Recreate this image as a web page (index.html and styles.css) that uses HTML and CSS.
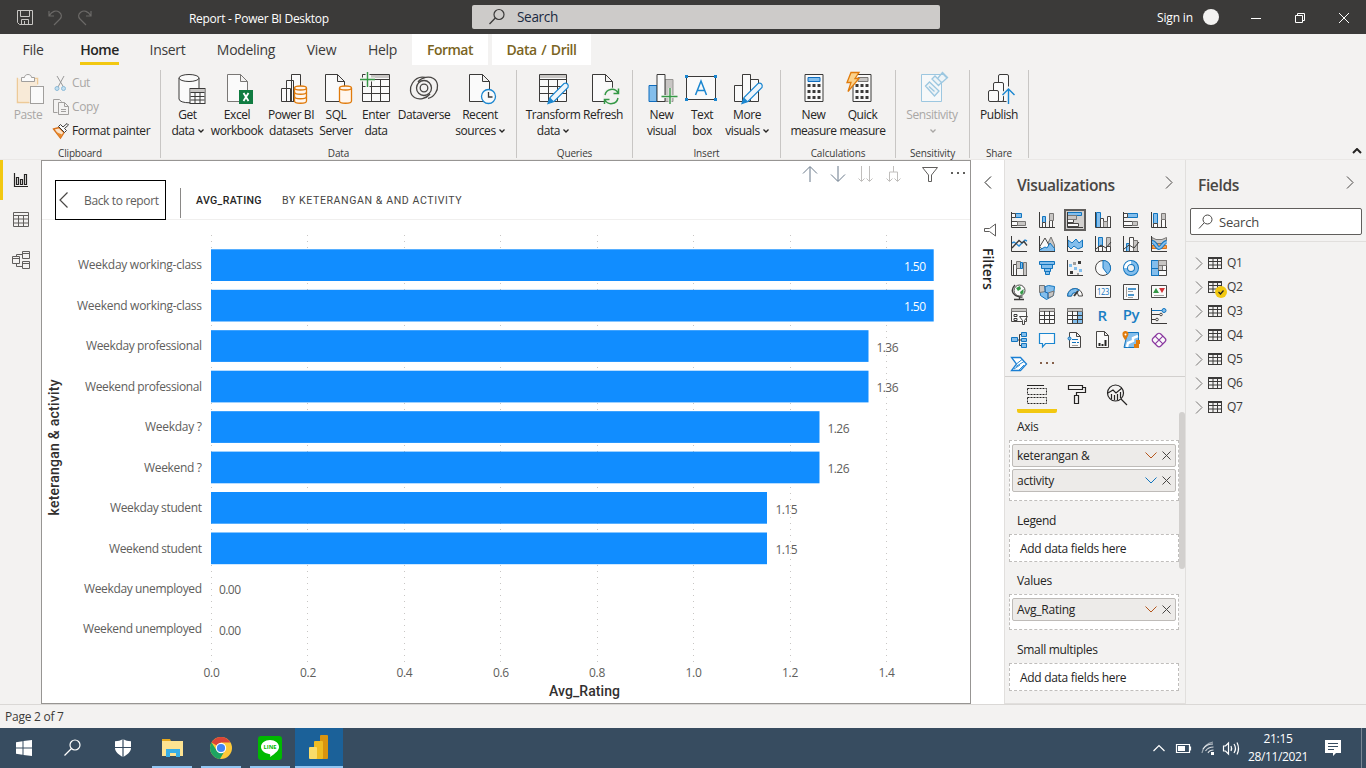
FILE: index.html
```html
<!DOCTYPE html>
<html lang="en">
<head>
<meta charset="utf-8">
<title>Report - Power BI Desktop</title>
<link rel="stylesheet" href="styles.css">
</head>
<body>
<svg class="defs" width="0" height="0">
  <defs>
    <symbol id="table" viewBox="0 0 14 12"><rect x=".5" y=".5" width="13" height="11" class="ln"/><path class="ln" d="M1 1.500h12M1 4.500h12M1 8h12M5 2v9.500M9.500 2v9.500"/></symbol>
    <symbol id="down" viewBox="0 0 12 7"><path fill="none" stroke="currentColor" d="M.5.5l5.500 5.500 5.500-5.500"/></symbol>
    <symbol id="x" viewBox="0 0 9 9"><path fill="none" stroke="#484644" d="M.5.5l8 8m0-8l-8 8"/></symbol>
    <symbol id="right" viewBox="0 0 8 13"><path fill="none" stroke="currentColor" d="M1 .5l6 6-6 6"/></symbol>
    <symbol id="caret" viewBox="0 0 6 4"><path fill="none" stroke="currentColor" stroke-width="1.300" d="M.5.5L3 3 5.500.5"/></symbol>
  </defs>
</svg>

<header class="titlebar">
  <svg class="quick" viewBox="0 0 100 34">
    <path fill="none" stroke="#c8c6c4" d="M17.500 10.500h15v14h-13l-2-2zM20.500 10.500v6h9v-6M21.500 24.500v-5h7v5M24.500 21v3"/>
    <path fill="none" stroke="#6b6967" stroke-width="1.200" d="M49 11v5h5M49 16c3-5 7-6 10-4 3 2 3 5 1 7l-6 6M91 11v5h-5M91 16c-3-5-7-6-10-4-3 2-3 5-1 7l6 6"/>
  </svg>
  <span class="doc-title">Report - Power BI Desktop</span>
  <div class="top-search">
    <svg width="18" height="18" viewBox="0 0 18 18"><circle cx="11" cy="6.500" r="5" fill="none" stroke="#3b3a39" stroke-width="1.200"/><path d="M7.300 10L1.500 16" stroke="#3b3a39" stroke-width="1.300"/></svg>
    <span>Search</span>
  </div>
  <span class="signin">Sign in</span>
  <span class="avatar"></span>
  <svg class="winctl" viewBox="1240 0 126 34"><path fill="none" stroke="#fff" d="M1251 18.500h10M1295.500 15.500h7v7h-7zM1297.500 15v-1.500h7v7h-1.500M1339 13l10 10m0-10l-10 10"/></svg>
</header>

<nav class="tabs">
  <span class="t-file">File</span><span class="t-home"><b>Home</b></span><span class="t-insert">Insert</span><span class="t-model">Modeling</span><span class="t-view">View</span><span class="t-help">Help</span><span class="ctx t-format">Format</span><span class="ctx t-drill">Data / Drill</span>
</nav>

<section class="ribbon">
  <div class="group g-clip">
    <div class="cmds">
      <div class="cmd off w-paste">
        <svg viewBox="8 70 40 36"><path d="M18 78.500h-.500v24h12M35 78.500h2.500v6" fill="#faeedd" stroke="#edca98" stroke-width="1.500"/><rect x="18" y="79" width="19" height="22" fill="#f8ead7"/><path d="M21.500 81.500v-4h3c0-4 7-4 7 0h3v4z" class="paper" stroke="#a19f9d"/><rect x="30.500" y="86.500" width="13" height="17" class="paper" stroke="#a19f9d"/></svg>
        <span>Paste</span>
      </div>
      <div class="clip-list">
        <div class="off"><svg viewBox="0 0 18 18"><path d="M5 2l6.500 11M12 2L6 13" fill="none" stroke="#999"/><circle cx="5" cy="14.500" r="2" fill="#c4dff0" stroke="#8bbbd9"/><circle cx="11.500" cy="14.500" r="2" fill="#c4dff0" stroke="#8bbbd9"/></svg>Cut</div>
        <div class="off"><svg viewBox="0 0 18 18"><path d="M5.500 14.500h-4v-13h6l2 2M6.500 4.500h6l4 4v8h-10zM12.500 4.500v4h4M9 11.500h5M9 13.500h5" fill="none" stroke="#a19f9d"/></svg>Copy</div>
        <div><svg viewBox="0 0 18 18"><path d="M1.500 7l5.500-1.500 5 5L8.500 16z" fill="#fbe3c8" stroke="#d8711a" stroke-width="1.300"/><path d="M4 10l6 2.500-1.500 3.500z" fill="#e88a2c"/><path d="M6.500 4.500l6 6 2-2-2-2L16.500 3 15 1.500 11 5 8.500 2.500z" fill="#fafafa" stroke="#3b3a39"/></svg>Format painter</div>
      </div>
    </div>
    <div class="caption">Clipboard</div>
  </div>

  <div class="group g-data">
    <div class="cmds">
      <div class="cmd w45"><svg viewBox="167.500 70 40 36"><path class="paper ink" d="M178.500 78v21c0 5 20 5 20 0v-21"/><ellipse class="paper ink" cx="188.500" cy="78" rx="10" ry="3.500"/><rect x="189.500" y="88.500" width="15" height="15" class="paper ink"/><path d="M190 90.500h14" stroke="#c8c6c4" stroke-width="3"/><path class="ln" d="M190 92.500h14M190 96.500h14M190 100h14M194.500 92v11M199.500 92v11"/></svg><span>Get<br>data<svg class="caret"><use href="#caret"/></svg></span></div>
      <div class="cmd w54"><svg viewBox="217 70 40 36"><path class="paper soft" d="M227.500 74.500h13l7 7v20h-20zM240.500 74.500v7h7"/><rect x="239" y="90" width="14" height="14" fill="#107c41"/><path d="M243.500 93l5 8m0-8l-5 8" stroke="#fff" stroke-width="1.800"/></svg><span>Excel<br>workbook</span></div>
      <div class="cmd w54"><svg viewBox="271 70 40 36"><path class="paper ink" d="M291.500 74.500h9v27h-9zM286.500 80.500h7v21h-7zM281.500 88.500h9v13h-9z"/><path class="cyl" d="M294.500 88v13c0 3 12 3 12 0v-13"/><ellipse class="cyl" cx="300.500" cy="88" rx="6" ry="2"/><path class="cyl none" d="M294.500 92c0 3 12 3 12 0M294.500 96.500c0 3 12 3 12 0"/></svg><span>Power BI<br>datasets</span></div>
      <div class="cmd w36"><svg viewBox="316 70 40 36"><path class="paper ink" d="M325.500 74.500h12l7 7v20h-19zM337.500 74.500v7h7"/><path class="cyl" d="M339.500 88v13c0 3 12 3 12 0v-13"/><ellipse class="cyl" cx="345.500" cy="88" rx="6" ry="2"/></svg><span>SQL<br>Server</span></div>
      <div class="cmd w44"><svg viewBox="356 70 40 36"><path class="paper ink" d="M362.500 74.500h27v27h-27z"/><path d="M371 76.500h18" stroke="#c8c6c4" stroke-width="3"/><path class="ln" d="M363 79.500h26M363 86.500h26M363 93.500h26M371.500 79v22M380.500 79v22"/><path d="M360 79.500h15M367.500 72v15" stroke="#f3f2f1" stroke-width="4"/><path class="plus" d="M360 79.500h15M367.500 72v15"/></svg><span>Enter<br>data</span></div>
      <div class="cmd w52"><svg viewBox="404 70 40 36"><g fill="none" stroke="#484644" stroke-width="1.300"><circle cx="424" cy="88" r="3.800"/><circle cx="424" cy="88" r="7.500"/><path d="M430 94c-4 5-11 6-15.500 3.500-5-3-5-10-2-14.500 3-4.500 8-6.500 12.500-5.500M418 82c4-5 11-6 15.500-3.500 5 3 5 10 2 14.500-2 3-4.500 5-7.500 5.300"/></g></svg><span>Dataverse</span></div>
      <div class="cmd w60"><svg viewBox="460 70 40 36"><path class="paper ink" d="M469.500 74.500h13l7 7v20h-20zM482.500 74.500v7h7"/><circle cx="488.500" cy="96.500" r="7" class="paper" stroke="#1a86d0" stroke-width="1.300"/><path class="ln" stroke-width="1.300" d="M488.500 92v5h4"/></svg><span>Recent<br>sources<svg class="caret"><use href="#caret"/></svg></span></div>
    </div>
    <div class="caption">Data</div>
  </div>

  <div class="group g-query">
    <div class="cmds">
      <div class="cmd w56"><svg viewBox="533 70 40 36"><path class="paper ink" d="M539.500 74.500h27v27h-27z"/><path d="M540 76.500h26" stroke="#c8c6c4" stroke-width="3"/><path class="ln" d="M540 79.500h26M540 86.500h26M540 93.500h26M548.500 79v22M557.500 79v22"/><path class="pencil" d="M548 103.500l2-6 14-14c3-1 5 1 4 4l-14 14z"/><path d="M548 103.500l2-6 4 4z" fill="#1a86d0"/></svg><span>Transform<br>data<svg class="caret"><use href="#caret"/></svg></span></div>
      <div class="cmd w44"><svg viewBox="583 70 40 36"><path class="paper ink" d="M592.500 74.500h13l7 7v20h-20zM605.500 74.500v7h7"/><circle cx="611.500" cy="96.500" r="9" fill="#f3f2f1"/><path d="M605 95a7 7 0 0 1 13-2M618.500 88.500v5h-5M618 98a7 7 0 0 1-13 2M604.500 104v-4.500h5" fill="none" stroke="#359846" stroke-width="1.500"/></svg><span>Refresh</span></div>
    </div>
    <div class="caption">Queries</div>
  </div>

  <div class="group g-insert">
    <div class="cmds">
      <div class="cmd w37"><svg viewBox="641.500 70 40 36"><path fill="#83beec" stroke="#0f6cbd" d="M648.500 85.500h8v16h-8z"/><path fill="#c8c6c4" stroke="#979593" d="M664.500 79.500h8v22h-8z"/><path class="paper ink" d="M656.500 74.500h8v27h-8z"/><path d="M661 96.500h16M669.500 88v16" stroke="#f3f2f1" stroke-width="3"/><path class="plus" d="M661 96.500h16M669.500 88v16"/></svg><span>New<br>visual</span></div>
      <div class="cmd w44"><svg viewBox="682 70 40 36"><path class="paper ink" d="M686.500 76.500h29v23h-29z"/><path fill="#1a86d0" d="M685 75h3v3h-3zM714 75h3v3h-3zM685 98h3v3h-3zM714 98h3v3h-3z"/><path d="M695.500 95l5.500-14 5.500 14M697.500 90.500h7" fill="none" stroke="#1a86d0" stroke-width="1.500"/></svg><span>Text<br>box</span></div>
      <div class="cmd w46"><svg viewBox="727 70 40 36"><path class="paper ink" d="M734.500 85.500h8v16h-8zM750.500 79.500h8v22h-8zM742.500 74.500h8v27h-8z"/><path class="pencil" d="M742 103.500l2-6 14-14c3-1 5 1 4 4l-14 14z"/><path d="M742 103.500l2-6 4 4z" fill="#1a86d0"/></svg><span>More<br>visuals<svg class="caret"><use href="#caret"/></svg></span></div>
    </div>
    <div class="caption">Insert</div>
  </div>

  <div class="group g-calc">
    <div class="cmds">
      <div class="cmd w49"><svg viewBox="793.500 70 40 36"><path class="paper ink" d="M804.500 74.500h18v27h-18z"/><path fill="#83beec" stroke="#0f6cbd" d="M807.500 77.500h12v4h-12z"/><path stroke="#3b3a39" stroke-width="3" stroke-dasharray="3 2" d="M807 85.500h13M807 91.500h13M807 97.500h13"/></svg><span>New<br>measure</span></div>
      <div class="cmd w49"><svg viewBox="842.500 70 40 36"><path class="paper ink" d="M852.500 74.500h18v27h-18z"/><path fill="#c8c6c4" stroke="#797775" d="M857.500 77.500h10v4h-10z"/><path stroke="#3b3a39" stroke-width="3" stroke-dasharray="3 2" d="M855 85.500h13M855 91.500h13M855 97.500h13"/><path fill="#fbd28b" stroke="#e07b0c" stroke-width="1.300" d="M850.500 72.500h8l-4 6h4l-11 13 3-9h-4z"/></svg><span>Quick<br>measure</span></div>
    </div>
    <div class="caption">Calculations</div>
  </div>

  <div class="group g-sens">
    <div class="cmds">
      <div class="cmd off w72"><svg viewBox="912 70 40 36"><path fill="#f6f8f9" stroke="#9cc7e0" d="M921.500 74.500h20v27h-20z"/><path fill="#eef4f7" stroke="#9cc7e0" stroke-width="1.300" d="M925.500 86l4-4 9.500 9-4.500 5zM929 86.500l5.500 5M932 79l6.500 6.500 3-3-6.500-6.500zM938 78l4-5 5 5-5 4.500M942 72l6 6"/></svg><span>Sensitivity<br><svg class="caret"><use href="#caret"/></svg></span></div>
    </div>
    <div class="caption">Sensitivity</div>
  </div>

  <div class="group g-share">
    <div class="cmds">
      <div class="cmd w58"><svg viewBox="979 70 40 36"><g class="paper ink"><rect x="998.500" y="74.500" width="10" height="27" rx="1.500"/><rect x="993.500" y="82.500" width="10" height="19" rx="1.500"/><rect x="988.500" y="90.500" width="10" height="11" rx="1.500"/></g><path d="M1008.500 104V89.500M1002.500 95l6-6 6 6" fill="none" stroke="#f3f2f1" stroke-width="4"/><path d="M1008.500 104V89M1002.500 95l6-6 6 6" fill="none" stroke="#1a86d0" stroke-width="1.400"/></svg><span>Publish</span></div>
    </div>
    <div class="caption">Share</div>
  </div>
  <svg class="collapse" viewBox="0 0 10 6"><path d="M1 5l4-4 4 4" fill="none" stroke="#252423" stroke-width="2"/></svg>
</section>

<main class="work">
  <aside class="rail">
    <div class="view on"><svg viewBox="0 0 20 20"><path d="M3.500 3v13.500H17M5.500 7.500h2v7h-2zM9.500 9.500h2v5h-2zM13.500 4.500h2v10h-2z" fill="none" stroke="#252423" stroke-width="1.200"/></svg></div>
    <div class="view"><svg viewBox="0 0 20 20"><path d="M2.500 2.500h15v14h-15zM2 5.500h16M2 9h16M2 13h16M7.500 5v12M12.500 5v12" fill="none" stroke="#605e5c"/></svg></div>
    <div class="view"><svg viewBox="0 0 20 20"><path d="M1.500 6.500h7v7h-7zM1.500 8.500h7M11.500 1.500h7v7h-7zM11.500 3.500h7M11.500 11.500h7v7h-7zM11.500 13.500h7M5.500 6V4.500h6M5.500 14v2.500h6" fill="none" stroke="#605e5c"/></svg></div>
  </aside>

  <section class="canvas">
    <div class="focus-head">
      <div class="back"><svg viewBox="0 0 10 16"><path d="M8.500.5L1 8l7.500 7.500" fill="none" stroke="#484644" stroke-width="1.200"/></svg><span>Back to report</span></div>
      <i class="bar"></i>
      <span class="measure">AVG_RATING</span><span class="by">BY KETERANGAN &amp; AND ACTIVITY</span>
      <svg class="tools" viewBox="800 163 170 22">
        <g fill="none" stroke="#797775"><path d="M810 182v-15M803 173.500l7-7 7 7M838 166v15M831 174.500l7 7 7-7" stroke="#69798a"/><path stroke="#c0bebc" d="M861.500 166v15M858.500 178.500l3 3 3-3M869.500 166v15M866.500 178.500l3 3 3-3M893.500 166v6M889.500 181v-9h8v9M886.500 178.500l3 3 3-3M894.500 178.500l3 3 3-3"/><path stroke="#605e5c" d="M922.500 167.500h15l-6 7.500v6.500h-3v-6.500z"/></g>
        <path fill="#605e5c" d="M951 172h2v2h-2zM957 172h2v2h-2zM963 172h2v2h-2z"/>
      </svg>
    </div>
    <svg class="chart" viewBox="42 220 928 483">
      <g class="grid"><path d="M211.500 235v428M307.500 235v428M404.500 235v428M500.500 235v428M597.500 235v428M693.500 235v428M790.500 235v428M886.500 235v428"/></g>
      <g fill="#118dff">
        <rect x="211" y="249.300" width="722.700" height="31.700"/><rect x="211" y="289.800" width="722.700" height="31.700"/>
        <rect x="211" y="330.200" width="657.500" height="31.700"/><rect x="211" y="370.700" width="657.500" height="31.700"/>
        <rect x="211" y="411.200" width="608.500" height="31.700"/><rect x="211" y="451.600" width="608.500" height="31.700"/>
        <rect x="211" y="492" width="556" height="31.700"/><rect x="211" y="532.500" width="556" height="31.700"/>
      </g>
      <g class="cat">
        <text x="202" y="269" textLength="124">Weekday working-class</text>
        <text x="202" y="310" textLength="125">Weekend working-class</text>
        <text x="202" y="350" textLength="116">Weekday professional</text>
        <text x="202" y="391" textLength="117">Weekend professional</text>
        <text x="202" y="431" textLength="57">Weekday ?</text>
        <text x="202" y="472" textLength="58">Weekend ?</text>
        <text x="202" y="512" textLength="92">Weekday student</text>
        <text x="202" y="553" textLength="93">Weekend student</text>
        <text x="202" y="593" textLength="118">Weekday unemployed</text>
        <text x="202" y="633" textLength="119">Weekend unemployed</text>
      </g>
      <g class="val"><text class="in" x="904" y="271" textLength="22">1.50</text><text class="in" x="904" y="311" textLength="22">1.50</text><text x="876.500" y="352" textLength="22">1.36</text><text x="876.500" y="392" textLength="22">1.36</text><text x="827.500" y="433" textLength="22">1.26</text><text x="827.500" y="473" textLength="22">1.26</text><text x="775.500" y="514" textLength="22">1.15</text><text x="775.500" y="554" textLength="22">1.15</text><text x="219" y="594" textLength="22">0.00</text><text x="219" y="635" textLength="22">0.00</text></g>
      <g class="tick"><text x="211.500" y="677">0.0</text><text x="308" y="677">0.2</text><text x="404.400" y="677">0.4</text><text x="500.800" y="677">0.6</text><text x="597" y="677">0.8</text><text x="693.500" y="677">1.0</text><text x="790" y="677">1.2</text><text x="886.500" y="677">1.4</text></g>
      <text class="axis-t" x="584.500" y="696" textLength="71">Avg_Rating</text>
      <text class="axis-t" transform="translate(59 447.500) rotate(-90)" textLength="136">keterangan &amp; activity</text>
    </svg>
  </section>

  <aside class="filters">
    <svg class="f-chev" viewBox="0 0 8 13"><path d="M7 .5l-6 6 6 6" fill="none" stroke="#252423"/></svg>
    <svg class="f-fun" viewBox="0 0 13 14"><path d="M11.500 1v12L5.500 8.500h-5v-3h5z" fill="none" stroke="#605e5c"/></svg>
    <span>Filters</span>
  </aside>

  <aside class="viz">
    <div class="pane-head"><h2 class="h-viz">Visualizations</h2><svg><use href="#right"/></svg></div>
    <div class="palette">
      <svg viewBox="0 0 16 16"><path class="b" d="M4.500 1.500h6v4h-6z"/><path class="w" d="M.5 1.500h4v4h-4zM.5 9.500h6v4h-6z"/><path class="g" d="M6.500 9.500h8v4h-8z"/><path class="ax" d="M.5 0v15.500H16"/></svg>
      <svg viewBox="0 0 16 16"><path class="b" d="M3.500 4.500h3v6h-3z"/><path class="w" d="M3.500 10.500h3v5h-3zM10.500 8.500h3v7h-3z"/><path class="g" d="M10.500 1.500h4v7h-4z"/><path class="ax" d="M.5 0v15.500H16"/></svg>
      <svg class="sel" viewBox="-1 -1 18 18"><path class="b" d="M.5.5h14v3h-14z"/><path class="w" d="M.5 7.500h6v3h-6zM.5 11.500h11v3h-11z"/><path class="g" d="M.5 3.500h9v4h-9z"/><path class="ax" d="M.5 0v15.500H16"/></svg>
      <svg viewBox="0 0 16 16"><path class="b" d="M1.500.5h4v15h-4z"/><path class="w" d="M5.500 6.500h3v9h-3zM12.500 4.500h3v11h-3z"/><path class="g" d="M8.500 9.500h4v6h-4z"/><path class="ax" d="M.5 0v15.500H16"/></svg>
      <svg viewBox="0 0 16 16"><path class="b" d="M4.500 1.500h10v4h-10z"/><path class="w" d="M.5 1.500h4v4h-4zM.5 9.500h9v4h-9z"/><path class="g" d="M9.500 9.500h5v4h-5z"/><path class="ax" d="M.5 0v15.500H16"/></svg>
      <svg viewBox="0 0 16 16"><path class="b" d="M2.500 1.500h4v10h-4z"/><path class="w" d="M2.500 11.500h4v4h-4zM10.500 7.500h4v8h-4z"/><path class="g" d="M10.500 1.500h4v6h-4z"/><path class="ax" d="M.5 0v15.500H16"/></svg>

      <svg viewBox="0 0 16 16"><path d="M1 7l2-1 5 4 6-6 2 1" fill="none" stroke="#2a8ad4" stroke-width="1.400"/><path class="ax" stroke-width="1.300" d="M1 12l7-7.500 3 2.500 2-1.500 3 4"/><path class="ax" d="M.5 0v15.500H16"/></svg>
      <svg viewBox="0 0 16 16"><path class="g" d="M9 7l3-6 3.500 8v6H9z"/><path class="w" d="M.5 11L6 2l5 9-5 4z"/><path class="b" d="M.5 15.500V14L6 11l2 1 3-5 4.500 5.500v3z"/><path class="ax" d="M.5 0v15.500H16"/></svg>
      <svg viewBox="0 0 16 16"><path class="b" d="M1 4l4 3 4-4 3 4 3.500-3v7L11 13l-4-3-3 3-3-3z"/><path class="ax" d="M.5 0v15.500H16"/></svg>
      <svg viewBox="0 0 16 16"><path class="b" d="M3.500 1.500h4v9h-4z"/><path class="g" d="M11.500 1.500h4v9h-4z"/><path class="w" d="M3.500 10.500h4v5h-4zM11.500 10.500h4v5h-4z"/><path class="ax" d="M.5 0v15.500H16M1 13l5-4 5 3 5-6"/></svg>
      <svg viewBox="0 0 16 16"><path class="b" d="M3.500 7.500h4v8h-4z"/><path class="w" d="M6.500 1.500h4v14h-4z"/><path class="g" d="M10.500 4.500h4v11h-4z"/><path class="ax" d="M.5 0v15.500H16M1 13l5-4 5 3 5-6"/></svg>
      <svg viewBox="0 0 16 16"><path d="M1 9.500h4l2-2h3l2 2h3.500v3H1z" fill="#f2a052" stroke="#d8711a"/><path class="g" d="M1 1.500l4 2h6l4.500-2v3l-4.500 3H6L1 4.500z"/><path d="M1 6c4 0 4 6 7 6s4-6 7.500-6" fill="none" stroke="#1175bf" stroke-width="4"/><path d="M1 6c4 0 4 6 7 6s4-6 7.500-6" fill="none" stroke="#83beec" stroke-width="2"/><path class="ax" d="M.5 0v15.500H16"/></svg>

      <svg viewBox="0 0 16 16"><path class="w" d="M2.500 4.500h3v11h-3z"/><path class="g" d="M5.500 1.500h4v7h-4zM12.500 2.500h3v13h-3z"/><path class="b" d="M9.500 2.500h2v6h-2z"/><path class="ax" d="M.5 0v15.500H16"/></svg>
      <svg viewBox="0 0 16 16"><path class="b" d="M.5 1.500h15v3h-15zM2.500 4.500h11v4h-11zM5.500 8.500h6v3h-6zM6.500 11.500h4v3h-4z"/></svg>
      <svg viewBox="0 0 16 16"><path fill="#83beec" d="M2 4h3v3H2zM7 7h3v3H7zM12 9h3v3h-3z"/><path fill="#3b3a39" d="M11 1h3v3h-3zM3 11h3v3H3z"/><path fill="#a19f9d" d="M6 2h3v3H6zM10 13h2v2h-2z"/><path class="ax" d="M.5 0v15.500H16"/></svg>
      <svg viewBox="0 0 16 16"><circle class="w" cx="8" cy="8" r="7.500"/><path class="b" d="M8 8V.5A7.500 7.500 0 0 1 12.500 14z"/></svg>
      <svg viewBox="0 0 16 16"><circle cx="8" cy="8" r="5.500" fill="none" stroke="#1175bf" stroke-width="5"/><circle cx="8" cy="8" r="5.500" fill="none" stroke="#83beec" stroke-width="3"/><path d="M2.500 8A5.500 5.500 0 0 1 8 2.500" fill="none" stroke="#fff" stroke-width="3"/></svg>
      <svg viewBox="0 0 16 16"><path class="w" d="M.5.5h15v15H.5z"/><path class="b" d="M.5.5h7v8h-7zM.5 8.500h7v7h-7z"/><path class="g" d="M7.500.5h8v5h-8zM7.500 5.500h4v5h-4z"/><path class="ax" d="M7.500 10.500h8"/></svg>

      <svg viewBox="0 0 16 16"><circle class="w" cx="8.500" cy="6.500" r="5.500"/><path fill="#359846" d="M5 4l4-2 1 3-3 2zM9 8l3.500-3v4l-2.500 2z"/><path class="ax" stroke-width="1.300" d="M4 1c-6 6-1 12.500 7.500 12M8.500 13v2.500M3 15.500h10"/></svg>
      <svg viewBox="0 0 16 16"><path class="b" d="M.5 1.500l6 1 3-1 6 1-1 9-7 4-6-4z"/><path class="g" d="M.5 1.500h5l1 6-6 1zM9 9l6-2-1 5-5 2z"/><path d="M6 2v6l3 1v5" fill="none" stroke="#0f6cbd"/></svg>
      <svg viewBox="0 0 16 16"><path class="w" d="M.5 12a7.500 7.500 0 0 1 15 0h-4a3.500 3.500 0 0 0-7 0z"/><path class="b" d="M.5 12A7.500 7.500 0 0 1 12 5.700L9.500 9a3.500 3.500 0 0 0-5 3z"/><path class="ax" stroke-width="2" d="M7 12l4-5"/></svg>
      <svg viewBox="0 0 16 16"><path class="w" d="M.5 1.500h15v12H.5z"/><text x="8" y="11" textLength="12" lengthAdjust="spacingAndGlyphs" class="i123">123</text></svg>
      <svg viewBox="0 0 16 16"><path class="w" d="M.5.5h15v15H.5z"/><path d="M5 5h8M5 11h6" stroke="#1175bf" stroke-width="1.500"/><path d="M3.500 3v10M5 7.500h5M5 13.500h5" stroke="#a19f9d"/></svg>
      <svg viewBox="0 0 16 16"><path class="w" d="M.5 1.500h15v12H.5z"/><path fill="#359846" d="M2 9l3-5 3 5z"/><path fill="#d13438" d="M8 4h6l-3 5z"/><path stroke="#a19f9d" d="M3 11.500h10"/></svg>

      <svg viewBox="0 0 16 16"><path class="w" d="M.5 1.500h15v12H.5z"/><path class="g" d="M.5.5h15v3H.5z"/><path class="ax" d="M3 6.500h3v2H3zM3 10.500h3v2H3z"/><path class="w" d="M8.500 8.500h8l-3 4v4h-2v-4z"/></svg>
      <svg viewBox="0 0 16 16"><path class="w" d="M.5.5h15v15H.5z"/><path class="g" d="M.5.5h15v3H.5z"/><path class="ax" d="M.5 7.500h15M.5 11.500h15M5.500 3v12M10.500 3v12"/></svg>
      <svg viewBox="0 0 16 16"><path class="w" d="M.5.5h15v15H.5z"/><path fill="#83beec" d="M10 3h5v12H5v-4h5z"/><path class="g" d="M.5.5h15v3H.5z"/><path class="ax" d="M.5 7.500h15M.5 11.500h15M5.500 3v12M10.500 3v12"/></svg>
      <svg viewBox="0 0 16 16"><text class="lang" x="7" y="13">R</text></svg>
      <svg viewBox="0 0 16 16"><text class="lang" x="8" y="12">Py</text></svg>
      <svg viewBox="0 0 16 16"><path class="ax" d="M.5 0v15.500H16M1 6.500h8M1 11.500h4M9 6.500h2"/><path d="M1 2.500h10" stroke="#1175bf"/><circle class="b" cx="13" cy="2.500" r="2"/><circle class="w" cx="10" cy="6.500" r="1.300"/><circle class="w" cx="6" cy="11.500" r="1.300"/></svg>

      <svg viewBox="0 0 16 16"><path class="ax" d="M6 8h5M8.500 2.500v11M8.500 2.500h2M8.500 13.500h2"/><path class="b" d="M.5 5.500h6v4h-6zM10.500.5h5v4h-5zM10.500 6.500h5v3h-5zM10.500 11.500h5v4h-5z"/></svg>
      <svg viewBox="0 0 16 16"><path d="M.5 1.500h15v10h-9l-3 3.500v-3.500h-3z" fill="#fafafa" stroke="#1a86d0" stroke-width="1.200"/></svg>
      <svg viewBox="0 0 16 16"><path class="w" d="M2.500.5h7l4 4v11h-11zM9.500.5v4h4"/><circle class="b" cx="2.500" cy="6.500" r="1.500"/><path d="M5 7.500h6M5 10.500h4M10 10.500h2" stroke="#1175bf"/><path stroke="#a19f9d" d="M5 13.500h6"/></svg>
      <svg viewBox="0 0 16 16"><path class="w" d="M1.500-.5h8l4 4v12h-12zM9.500-.5v4h4"/><path d="M4.500 11v3M7.500 12v2M10.500 8v6" stroke="#252423" stroke-width="2"/></svg>
      <svg viewBox="0 0 16 16"><path class="b" d="M4.500.5h11v15H1z"/><path d="M4 15l1-4 5-2V6l5-2" stroke="#fff" fill="none" stroke-width="2.500"/><path fill="#e07b0c" d="M2 8C0 5-.5 4-.5 2.500a3 3 0 0 1 6-1C5.500 4 4 5.500 2 8.500zM13 8h4v4h-4zM11 12h5v4h-5z"/><circle cx="2.500" cy="2.500" r="1" fill="#fff"/></svg>
      <svg viewBox="0 0 16 16"><g transform="rotate(45 8 8)" fill="#fafafa" stroke="#8b3aa0" stroke-width="1.200"><rect x="2.500" y="2.500" width="11" height="11" rx="2.500"/><path d="M8 2.500v11M2.500 8h11"/></g></svg>

      <svg viewBox="0 0 16 16"><path d="M.5 1.500h9l6 6.500-6 6.500h-9l5-6.500z" fill="#fff" stroke="#1a7fd4" stroke-width="1.300"/><path d="M6 7.500l5-4M5 10.500l8-5M3 13l6-4M8 14l5-5" fill="none" stroke="#2a8ad4"/></svg>
      <svg viewBox="0 0 16 16"><path fill="#85604a" d="M1 6h2v2H1zM7 6h2v2H7zM13 6h2v2h-2z"/></svg>
    </div>
    <div class="modes">
      <div class="on"><svg viewBox="0 0 22 22"><path d="M1 1.500h17" stroke="#252423"/><path d="M1.500 4.500h19v6h-19zM1.500 13.500h19v6h-19z" fill="none" stroke="#252423" stroke-dasharray="2 1"/></svg></div>
      <div><svg viewBox="0 0 22 22"><path d="M2.500 1.500h14v4h-14zM16.500 3.500h3v5h-9v3M8.500 11.500h4v8h-4z" fill="none" stroke="#252423" stroke-width="1.200"/></svg></div>
      <div><svg viewBox="0 0 22 22"><path d="M15 15l6 6M2 9l5-3 3 3 6-5M5.500 10v5M8.500 11v5M11.500 10v6M14.500 8v6" stroke="#252423" fill="none" stroke-width="1.200"/><circle cx="9.500" cy="9" r="8" fill="none" stroke="#252423" stroke-width="1.200"/></svg></div>
    </div>
    <div class="wells">
      <i class="thumb"></i>
      <h3>Axis</h3>
      <div class="well"><div class="chip"><span>keterangan &amp;</span><svg class="dn red"><use href="#down"/></svg><svg class="cx"><use href="#x"/></svg></div><div class="chip"><span>activity</span><svg class="dn blue"><use href="#down"/></svg><svg class="cx"><use href="#x"/></svg></div></div>
      <h3>Legend</h3>
      <div class="well empty">Add data fields here</div>
      <h3>Values</h3>
      <div class="well"><div class="chip"><span>Avg_Rating</span><svg class="dn red"><use href="#down"/></svg><svg class="cx"><use href="#x"/></svg></div></div>
      <h3>Small multiples</h3>
      <div class="well empty">Add data fields here</div>
    </div>
  </aside>

  <aside class="fields">
    <div class="pane-head"><h2 class="h-fields">Fields</h2><svg><use href="#right"/></svg></div>
    <div class="find"><svg viewBox="0 0 16 16"><circle cx="9.500" cy="5.500" r="4.500" fill="none" stroke="#484644"/><path d="M6 9L1 14.500" stroke="#484644"/></svg><span>Search</span></div>
    <ul>
      <li><svg class="exp"><use href="#right"/></svg><i><svg><use href="#table"/></svg></i>Q1</li>
      <li><svg class="exp"><use href="#right"/></svg><i><svg><use href="#table"/></svg><svg class="badge" viewBox="0 0 12 12"><circle cx="6" cy="6" r="6" fill="#f2c811"/><path d="M3.500 6l2 2 3-3.500" fill="none" stroke="#252423" stroke-width="1.200"/></svg></i>Q2</li>
      <li><svg class="exp"><use href="#right"/></svg><i><svg><use href="#table"/></svg></i>Q3</li>
      <li><svg class="exp"><use href="#right"/></svg><i><svg><use href="#table"/></svg></i>Q4</li>
      <li><svg class="exp"><use href="#right"/></svg><i><svg><use href="#table"/></svg></i>Q5</li>
      <li><svg class="exp"><use href="#right"/></svg><i><svg><use href="#table"/></svg></i>Q6</li>
      <li><svg class="exp"><use href="#right"/></svg><i><svg><use href="#table"/></svg></i>Q7</li>
    </ul>
  </aside>
</main>

<footer class="status">Page 2 of 7</footer>

<div class="taskbar">
  <div class="app start"><svg viewBox="0 0 24 24"><path fill="#fff" d="M4 6.300l6.500-1v6.200H4zM11.500 5.100L20 4v7.500h-8.500zM4 12.500h6.500v6.200l-6.500-1zM11.500 12.500H20V20l-8.500-1.100z"/></svg></div>
  <div class="app find-app"><svg viewBox="0 0 24 24"><circle cx="15" cy="9" r="5" fill="none" stroke="#fff" stroke-width="1.200"/><path d="M11.500 12.500l-7 7" stroke="#fff" stroke-width="1.300"/></svg></div>
  <div class="app"><svg viewBox="0 0 24 24"><path fill="#fff" d="M12 3c2.500 1.700 5 2.200 8 2.200V12c0 4-4 7-8 9-4-2-8-5-8-9V5.200c3 0 5.500-.5 8-2.200z"/><path d="M12 3v18M4 11.500h16" stroke="#374c60" stroke-width="1.200"/></svg></div>
  <div class="app run"><svg viewBox="0 0 24 24"><path fill="#e8a91c" d="M2 3h8l1 2H2z"/><path fill="#fee391" d="M2 5h21v15H2z"/><path fill="#38aee6" d="M6 13h14v8h-4v-4h-6v4H6z"/></svg></div>
  <div class="app run"><svg viewBox="0 0 24 24"><circle cx="12" cy="12" r="11" fill="#fdc939"/><path fill="#db4437" d="M12 12L2.500 6.500A11 11 0 0 1 21.500 6.500H12z"/><path fill="#1da462" d="M2.500 6.500A11 11 0 0 0 11 23l5.200-9L12 17l-4-2z"/><circle cx="12" cy="12" r="5.200" fill="#fff"/><circle cx="12" cy="12" r="4.100" fill="#4285f4"/></svg></div>
  <div class="app run"><svg viewBox="0 0 24 24"><rect width="24" height="24" rx="3" fill="#00b900"/><path fill="#fff" d="M12 4c5 0 9 3 9 7 0 3-3 6-9 10 .5-2 .5-3-1-3-5-1-8-4-8-7 0-4 4-7 9-7z"/><text class="line-t" x="12" y="13.200" textLength="13" lengthAdjust="spacingAndGlyphs">LINE</text></svg></div>
  <div class="app active"><svg viewBox="0 0 24 24"><rect x="13" width="8" height="24" rx="1" fill="#d9940f"/><rect x="7" y="6" width="9" height="18" rx="1" fill="#eebc22"/><rect x="2" y="12" width="8" height="12" rx="1" fill="#f8dc6a"/></svg></div>
  <svg class="tray" viewBox="1150 728 96 40"><g fill="none" stroke="#fff" stroke-width="1.200"><path d="M1153.500 751l5.500-5.500 5.500 5.500"/><path d="M1176.500 744.500h13v8h-13zM1190.500 746.500v4"/><path d="M1223.500 746v5h2l3 3v-11l-3 3zM1231 746c1 2 1 3 0 5M1234 744c2 3 2 6 0 9M1237 742.500c2 4 2 8 0 12"/><path d="M1203 749c2-3 5-5 10-5M1205.500 751c2-3 4-4 8-4M1208 753c1-2 3-3 5.500-3" opacity=".8"/><path d="M1202 753a13 13 0 0 1 11-11" opacity=".5"/></g><path fill="#fff" d="M1178 746h7v5h-7zM1211 752h3v3h-3z"/></svg>
  <div class="clock"><span>21:15</span><span>28/11/2021</span></div>
  <svg class="note" viewBox="0 0 16 16"><path fill="#fff" d="M0 0h16v13h-5l-3 3v-3H0z"/><path d="M3 3.500h10M3 6.500h10M3 9.500h6" stroke="#374c60"/></svg>
  <i class="peek"></i>
</div>
</body>
</html>
```
FILE: styles.css
```css
* { box-sizing: border-box; }
body { margin: 0; width: 1366px; height: 768px; overflow: hidden; background: #f3f2f1; color: #252423; font: 12px/16px "Open Sans", "Noto Sans", sans-serif; letter-spacing: -.35px; display: flex; flex-direction: column; }
h2, h3, ul { margin: 0; padding: 0; }
svg { flex: none; display: block; }
.defs { position: absolute; }
.ln { fill: none; stroke: #3b3a39; }
.paper { fill: #fafafa; }
.ink { stroke: #3b3a39; }
.soft { stroke: #797775; }
.cyl { fill: #fff6ee; stroke: #e07b0c; stroke-width: 1.3; }
.none { fill: none; }
.plus { stroke: #359846; stroke-width: 1.4; }
.pencil { fill: #eef6fc; stroke: #1a86d0; stroke-width: 1.2; }

.titlebar { height: 34px; flex: none; background: #3b3a39; color: #fff; display: flex; align-items: center; }
.quick { width: 100px; height: 34px; }
.doc-title { margin-left: 89px; width: 283px; padding-top: 3px; letter-spacing: -.29px; }
.top-search { width: 468px; height: 24px; background: #cdcbc9; border-radius: 2px; color: #1b2a41; display: flex; align-items: center; gap: 11px; padding-left: 16px; font-size: 13.6px; }
.signin { margin-left: 217px; width: 46px; padding-top: 2px; letter-spacing: -.15px; }
.avatar { width: 16px; height: 16px; border-radius: 50%; background: #f3f2f1; }
.winctl { width: 126px; height: 34px; margin-left: 21px; }

.tabs { height: 32px; flex: none; display: flex; font-size: 14px; letter-spacing: -.3px; color: #3b3a39; }
.tabs span { text-align: center; line-height: 32px; height: 31px; }
.t-file { width: 66px; } .t-home { width: 67px; } .t-insert { width: 69px; } .t-model { width: 88px; } .t-view { width: 63px; } .t-help { width: 59px; }
.tabs b { display: inline-block; height: 31px; border-bottom: 3px solid #f2c811; font-weight: 600; color: #252423; letter-spacing: -.5px; }
.tabs .ctx { background: #fff; color: #7a6422; font-weight: 600; letter-spacing: -.5px; }
.t-format { width: 76px; margin-right: 4px; } .t-drill { width: 99px; }
.tabs .t-drill { word-spacing: 1.5px; }

.ribbon { height: 94px; flex: none; display: flex; padding-top: 4px; border-bottom: 1px solid #eae8e6; }
.group { height: 88px; border-right: 1px solid #c8c6c4; display: flex; flex-direction: column; flex: none; }
.cmds { display: flex; height: 75px; flex: none; }
.caption { text-align: center; font-size: 10px; letter-spacing: -.15px; line-height: 16px; color: #3b3a39; }
.g-clip { width: 161px; } .g-data { width: 356px; } .g-query { width: 116px; } .g-insert { width: 148px; } .g-calc { width: 115px; } .g-sens { width: 74px; } .g-share { width: 59px; }
.g-data .cmds { padding-left: 4px; } .g-query .cmds { padding-left: 8px; } .g-insert .cmds { padding-left: 10px; } .g-calc .cmds { padding-left: 8px; }
.cmd { display: flex; flex-direction: column; align-items: center; white-space: nowrap; text-align: center; flex: none; letter-spacing: -.43px; }
.cmd > svg { width: 40px; height: 36px; }
.cmd > span { padding-top: 1px; }
.cmd .caret { display: inline-block; width: 6px; height: 4px; margin: 0 0 2px 3px; }
.off { color: #a9a7a5; }
.w-paste { width: 40px; margin-left: 8px; } .w36 { width: 36px; } .w37 { width: 37px; } .w44 { width: 44px; } .w45 { width: 45px; } .w46 { width: 46px; } .w49 { width: 49px; } .w52 { width: 52px; } .w54 { width: 54px; } .w56 { width: 56px; } .w58 { width: 58px; } .w60 { width: 60px; } .w72 { width: 72px; }
.clip-list { margin: 1px 0 0 4px; white-space: nowrap; letter-spacing: -.4px; }
.clip-list div { display: flex; align-items: center; gap: 2px; height: 24px; }
.clip-list svg { width: 18px; height: 18px; }
.collapse { width: 10px; height: 6px; margin: 78px 0 0 323px; }

.work { height: 544px; flex: none; display: flex; }
.rail { width: 41px; }
.view { height: 40px; display: flex; align-items: center; justify-content: center; border-left: 3px solid transparent; padding-right: 2px; }
.view.on { border-color: #f2c811; }
.view svg { width: 20px; height: 20px; }
.canvas { width: 930px; background: #fff; border: 1px solid #979593; }
.focus-head { height: 59px; border-bottom: 1px solid #f0efee; display: flex; align-items: flex-start; padding-left: 13px; }
.back { width: 111px; height: 40px; margin-top: 19px; border: 1px solid #000; display: flex; align-items: center; padding-left: 3px; color: #605e5c; white-space: nowrap; }
.back svg { width: 10px; height: 16px; margin-right: 15px; }
.back span { padding-top: 1px; }
.bar { width: 1px; height: 30px; background: #8a8886; margin: 27px 15px 0 14px; }
.measure, .by { font: 400 10.6px/16px Roboto, sans-serif; letter-spacing: .58px; margin-top: 32px; white-space: nowrap; }
.measure { width: 86px; font-weight: 500; color: #252423; letter-spacing: .33px; }
.by { width: 183px; color: #484644; }
.tools { width: 170px; height: 22px; margin: 2px 0 0 auto; }
.chart { width: 928px; height: 483px; letter-spacing: 0; }
.grid path { stroke: #c8c6c4; stroke-dasharray: 1 5; }
.chart text { font-size: 12px; fill: #605e5c; }
.cat text { text-anchor: end; }
.tick text { text-anchor: middle; letter-spacing: -.35px; }
.chart .in { fill: #fff; }
.chart .axis-t { font: 500 14px Roboto, sans-serif; text-anchor: middle; fill: #32302f; }

.filters { width: 34px; background: #fff; border-right: 1px solid #e1dfdd; display: flex; flex-direction: column; align-items: center; }
.f-chev { width: 8px; height: 13px; margin-top: 16px; }
.f-fun { width: 13px; height: 14px; margin: 34px 0 11px 5px; }
.filters span { writing-mode: vertical-rl; font: 600 14px/20px "Open Sans", sans-serif; letter-spacing: 0; }

.viz { width: 181px; border-right: 1px solid #e1dfdd; border-bottom: 1px solid #e1dfdd; }
.pane-head { height: 48px; display: flex; align-items: center; justify-content: space-between; padding: 0 12px; }
.pane-head svg { width: 8px; height: 13px; margin-bottom: 4px; color: #484644; }
.pane-head h2 { font-size: 15.6px; font-weight: 600; color: #484644; letter-spacing: -.4px; padding-top: 1px; }
.pane-head .h-viz { font-size: 15.6px; letter-spacing: -.4px; }
.palette { display: grid; grid-template-columns: repeat(6, 28px); grid-auto-rows: 24px; place-items: center; height: 168px; }
.palette svg { width: 16px; height: 16px; overflow: visible; }
.palette .sel { width: 22px; height: 22px; background: #d2d0ce; border: 2px solid #605e5c; }
.b { fill: #83beec; stroke: #1175bf; } .g { fill: #c8c6c4; stroke: #797775; } .w { fill: #fafafa; stroke: #484644; } .ax { fill: none; stroke: #3b3a39; }
.i123 { font-size: 9px; fill: #1175bf; text-anchor: middle; }
.lang { font-size: 15px; font-weight: 600; fill: #1a7fc4; text-anchor: middle; }
.modes { height: 37px; border-top: 1px solid #d2d0ce; display: flex; padding: 7px 0 0 12px; }
.modes div { width: 40px; height: 29px; display: flex; justify-content: center; }
.modes .on { border-bottom: 4px solid #f2c811; border-radius: 0 0 2px 2px; }
.modes svg { width: 22px; height: 22px; }
.wells { position: relative; padding: 6px 6px 0 4px; }
.thumb { position: absolute; right: 0; top: -1px; width: 6px; height: 157px; background: #d2d0ce; border-radius: 3px; }
.wells h3 { font-size: 12px; font-weight: 400; line-height: 16px; padding-left: 8px; margin-bottom: 5px; letter-spacing: -.3px; }
.well { border: 1px dashed #c0bebc; background: #fff; padding: 3px 2px 8px; margin-bottom: 12px; display: grid; gap: 2px; }
.chip { height: 23px; background: #edebe9; border: 1px solid #bebbb8; border-radius: 2px; display: flex; align-items: center; padding: 0 4px; letter-spacing: -.25px; }
.chip span { flex: 1; }
.dn { width: 12px; height: 7px; margin-right: 5px; } .cx { width: 9px; height: 9px; }
.red { color: #b5561c; } .blue { color: #1175bf; }
.empty { height: 28px; padding: 6px 10px; margin-bottom: 11px; letter-spacing: -.3px; }

.fields { width: 180px; }
.find { width: 172px; height: 27px; margin-left: 4px; border: 1px solid #605e5c; border-radius: 2px; background: #fff; display: flex; align-items: center; gap: 5px; padding-left: 7px; font-size: 13px; letter-spacing: -.2px; color: #484644; }
.find svg { width: 16px; height: 16px; }
.find span { padding-top: 1px; }
.fields ul { margin-top: 6px; border-top: 1px solid #e1dfdd; padding-top: 9px; list-style: none; }
.fields li { height: 24px; display: flex; align-items: center; padding-left: 9px; color: #3b3a39; }
.exp { width: 8px; height: 13px; color: #797775; }
.fields li i { position: relative; font-style: normal; margin: 0 5px; }
.fields li i svg { width: 14px; height: 12px; }
.fields li i .badge { position: absolute; left: 7px; top: 5px; width: 12px; height: 12px; }

.status { height: 24px; flex: none; border-top: 1px solid #dad8d6; padding: 4px 5px; color: #3b3a39; letter-spacing: -.25px; }
.taskbar { height: 40px; flex: none; background: #374c60; color: #fff; display: flex; align-items: center; }
.app { width: 49px; height: 40px; display: flex; align-items: center; justify-content: center; }
.app svg { width: 24px; height: 24px; }
.start { width: 48px; } .find-app { width: 50px; padding-right: 2px; }
.run { background: linear-gradient(#91c6f3, #91c6f3) center bottom / 40px 2px no-repeat; }
.active { background: #1b6199; border-bottom: 2px solid #91c6f3; width: 48px; margin-left: 1px; }
.line-t { font: 700 6px "Open Sans", sans-serif; fill: #00b900; text-anchor: middle; letter-spacing: 0; }
.tray { width: 96px; height: 40px; margin-left: 807px; }
.clock { width: 64px; display: flex; flex-direction: column; align-items: center; line-height: 18px; }
.note { width: 16px; height: 16px; margin-left: 15px; }
.peek { width: 1px; height: 40px; background: #7a8794; margin-left: 20px; }
```
